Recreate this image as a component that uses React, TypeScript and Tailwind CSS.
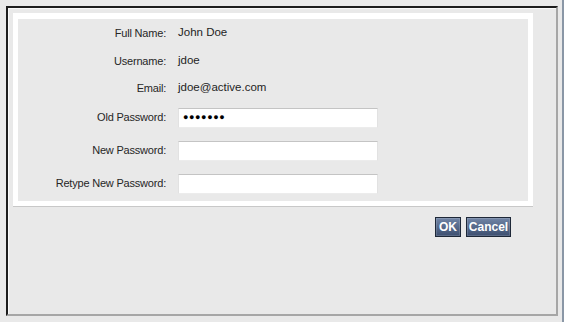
import React from "react";

const font = { fontFamily: '"Liberation Sans", Arial, sans-serif' };

function InfoRow({ label, value, h }: { label: string; value: string; h: string }) {
  return (
    <div className={`flex items-center ${h}`}>
      <div className="w-[148px] text-right text-[11px] tracking-[-0.2px] text-[#262626]">{label}</div>
      <div className="pl-[12px] text-[11.5px] text-[#1e1e1e]">{value}</div>
    </div>
  );
}

function InputRow({ label, dots }: { label: string; dots?: number }) {
  return (
    <div className="flex items-center h-[33px]">
      <div className="w-[148px] text-right text-[11px] tracking-[-0.2px] text-[#262626]">{label}</div>
      <div className="ml-[12px] w-[200px] h-[20px] bg-white border-t border-[#c4c4c4] border-l border-r border-b border-l-[#e2e2e2] border-r-[#e2e2e2] border-b-[#ececec] flex items-center pl-[4px]">
        {dots ? (
          <span className="text-[9px] leading-none tracking-[0.6px] text-black">
            {"●".repeat(dots)}
          </span>
        ) : null}
      </div>
    </div>
  );
}

function DlgButton({ children, w }: { children: React.ReactNode; w: string }) {
  return (
    <button
      type="button"
      className={`${w} h-[20px] border border-[#1e2838] bg-gradient-to-b from-[#7185a6] to-[#3d4f70] text-white font-bold text-[12px] leading-none shadow-[inset_0_0_0_1px_rgba(255,255,255,0.15)]`}
    >
      {children}
    </button>
  );
}

export default function App() {
  return (
    <div className="w-[564px] h-[322px] bg-[#e9e9e9] flex" style={font}>
      <div className="flex-1 pl-[6px] pt-[6px]">
        <div className="w-[552px] h-[310px] border-2 border-l-[#1c1c1c] border-t-[#1c1c1c] border-r-[#a6a6a6] border-b-[#a6a6a6]">
          <div className="h-full border-l border-t border-[#f8f8f8] p-[4px]">
            <div className="w-[520px] h-[194px] bg-white pt-[6px] px-[5px] pb-[5px] border-b border-[#c8c8c8]">
              <div className="h-full bg-[#e9e9e9] flex flex-col">
                <InfoRow label="Full Name:" value="John Doe" h="h-[28px]" />
                <InfoRow label="Username:" value="jdoe" h="h-[28px]" />
                <InfoRow label="Email:" value="jdoe@active.com" h="h-[26px]" />
                <InputRow label="Old Password:" dots={7} />
                <InputRow label="New Password:" />
                <InputRow label="Retype New Password:" />
              </div>
            </div>
            <div className="w-[520px] flex justify-end gap-[5px] pt-[10px] pr-[22px]">
              <DlgButton w="w-[26px]">OK</DlgButton>
              <DlgButton w="w-[45px]">Cancel</DlgButton>
            </div>
          </div>
        </div>
      </div>
      <div className="w-[2px] bg-[#8a97a6]" />
    </div>
  );
}
